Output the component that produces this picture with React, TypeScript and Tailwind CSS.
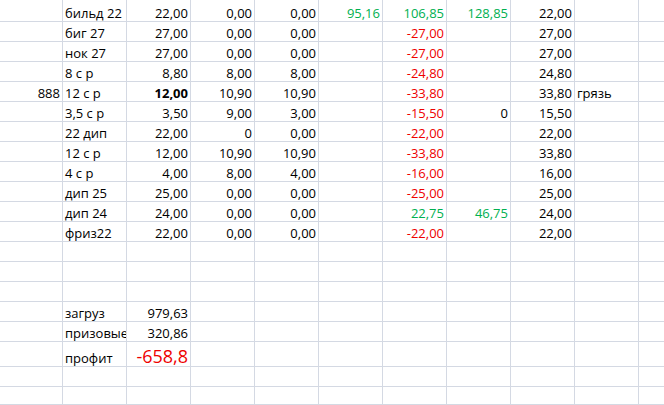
import React from 'react';

type Cell = { v: string; c?: 'g' | 'r'; b?: boolean; left?: boolean };

const G = '#00b050';

const rows: (Cell | null)[][] = [
  [null, { v: 'бильд 22', left: true }, { v: '22,00' }, { v: '0,00' }, { v: '0,00' }, { v: '95,16', c: 'g' }, { v: '106,85', c: 'g' }, { v: '128,85', c: 'g' }, { v: '22,00' }],
  [null, { v: 'биг 27', left: true }, { v: '27,00' }, { v: '0,00' }, { v: '0,00' }, null, { v: '-27,00', c: 'r' }, null, { v: '27,00' }],
  [null, { v: 'нок 27', left: true }, { v: '27,00' }, { v: '0,00' }, { v: '0,00' }, null, { v: '-27,00', c: 'r' }, null, { v: '27,00' }],
  [null, { v: '8 с р', left: true }, { v: '8,80' }, { v: '8,00' }, { v: '8,00' }, null, { v: '-24,80', c: 'r' }, null, { v: '24,80' }],
  [{ v: '888' }, { v: '12 с р', left: true }, { v: '12,00', b: true }, { v: '10,90' }, { v: '10,90' }, null, { v: '-33,80', c: 'r' }, null, { v: '33,80' }, { v: 'грязь', left: true }],
  [null, { v: '3,5 с р', left: true }, { v: '3,50' }, { v: '9,00' }, { v: '3,00' }, null, { v: '-15,50', c: 'r' }, { v: '0' }, { v: '15,50' }],
  [null, { v: '22 дип', left: true }, { v: '22,00' }, { v: '0' }, { v: '0,00' }, null, { v: '-22,00', c: 'r' }, null, { v: '22,00' }],
  [null, { v: '12 с р', left: true }, { v: '12,00' }, { v: '10,90' }, { v: '10,90' }, null, { v: '-33,80', c: 'r' }, null, { v: '33,80' }],
  [null, { v: '4 с р', left: true }, { v: '4,00' }, { v: '8,00' }, { v: '4,00' }, null, { v: '-16,00', c: 'r' }, null, { v: '16,00' }],
  [null, { v: 'дип 25', left: true }, { v: '25,00' }, { v: '0,00' }, { v: '0,00' }, null, { v: '-25,00', c: 'r' }, null, { v: '25,00' }],
  [null, { v: 'дип 24', left: true }, { v: '24,00' }, { v: '0,00' }, { v: '0,00' }, null, { v: '22,75', c: 'g' }, { v: '46,75', c: 'g' }, { v: '24,00' }],
  [null, { v: 'фриз22', left: true }, { v: '22,00' }, { v: '0,00' }, { v: '0,00' }, null, { v: '-22,00', c: 'r' }, null, { v: '22,00' }],
  [],
  [],
  [],
  [null, { v: 'загруз', left: true }, { v: '979,63' }],
  [null, { v: 'призовые', left: true }, { v: '320,86' }],
];

const widths = ['w-[63px]', 'w-[64px]', 'w-[64px]', 'w-[64px]', 'w-[64px]', 'w-[64px]', 'w-[64px]', 'w-[64px]', 'w-[64px]', 'w-[64px]', 'flex-1'];

const Row = ({ cells, h, big }: { cells: (Cell | null)[]; h: string; big?: boolean }) => (
  <div className={`flex ${h} border-b border-[#d4d9e3]`}>
    {widths.map((w, i) => {
      const cell = cells[i];
      return (
        <div
          key={i}
          className={`${w} shrink-0 border-r border-[#d4d9e3] flex items-end whitespace-nowrap px-[2px] pb-[1px] leading-none ${
            cell?.left ? 'justify-start overflow-hidden' : 'justify-end'
          } ${i === widths.length - 1 ? 'border-r-0' : ''}`}
        >
          {cell && (
            <span
              className={`${cell.b ? 'font-bold' : ''} ${big && i === 2 ? 'text-[18px]' : ''}`}
              style={cell.c ? { color: cell.c === 'g' ? G : '#ee0000' } : undefined}
            >
              {cell.v}
            </span>
          )}
        </div>
      );
    })}
  </div>
);

export default function App() {
  return (
    <div className="w-[664px] h-[405px] overflow-hidden bg-white text-black text-[13px] font-['Open_Sans','Noto_Sans',sans-serif] flex flex-col">
      {rows.map((r, i) => (
        <Row key={i} cells={r} h={i === 0 ? 'h-[22px]' : 'h-[20px]'} />
      ))}
      <Row cells={[null, { v: 'профит', left: true }, { v: '-658,8', c: 'r' }]} h="h-[25px]" big />
      <Row cells={[]} h="h-[20px]" />
      <Row cells={[]} h="flex-1" />
    </div>
  );
}
